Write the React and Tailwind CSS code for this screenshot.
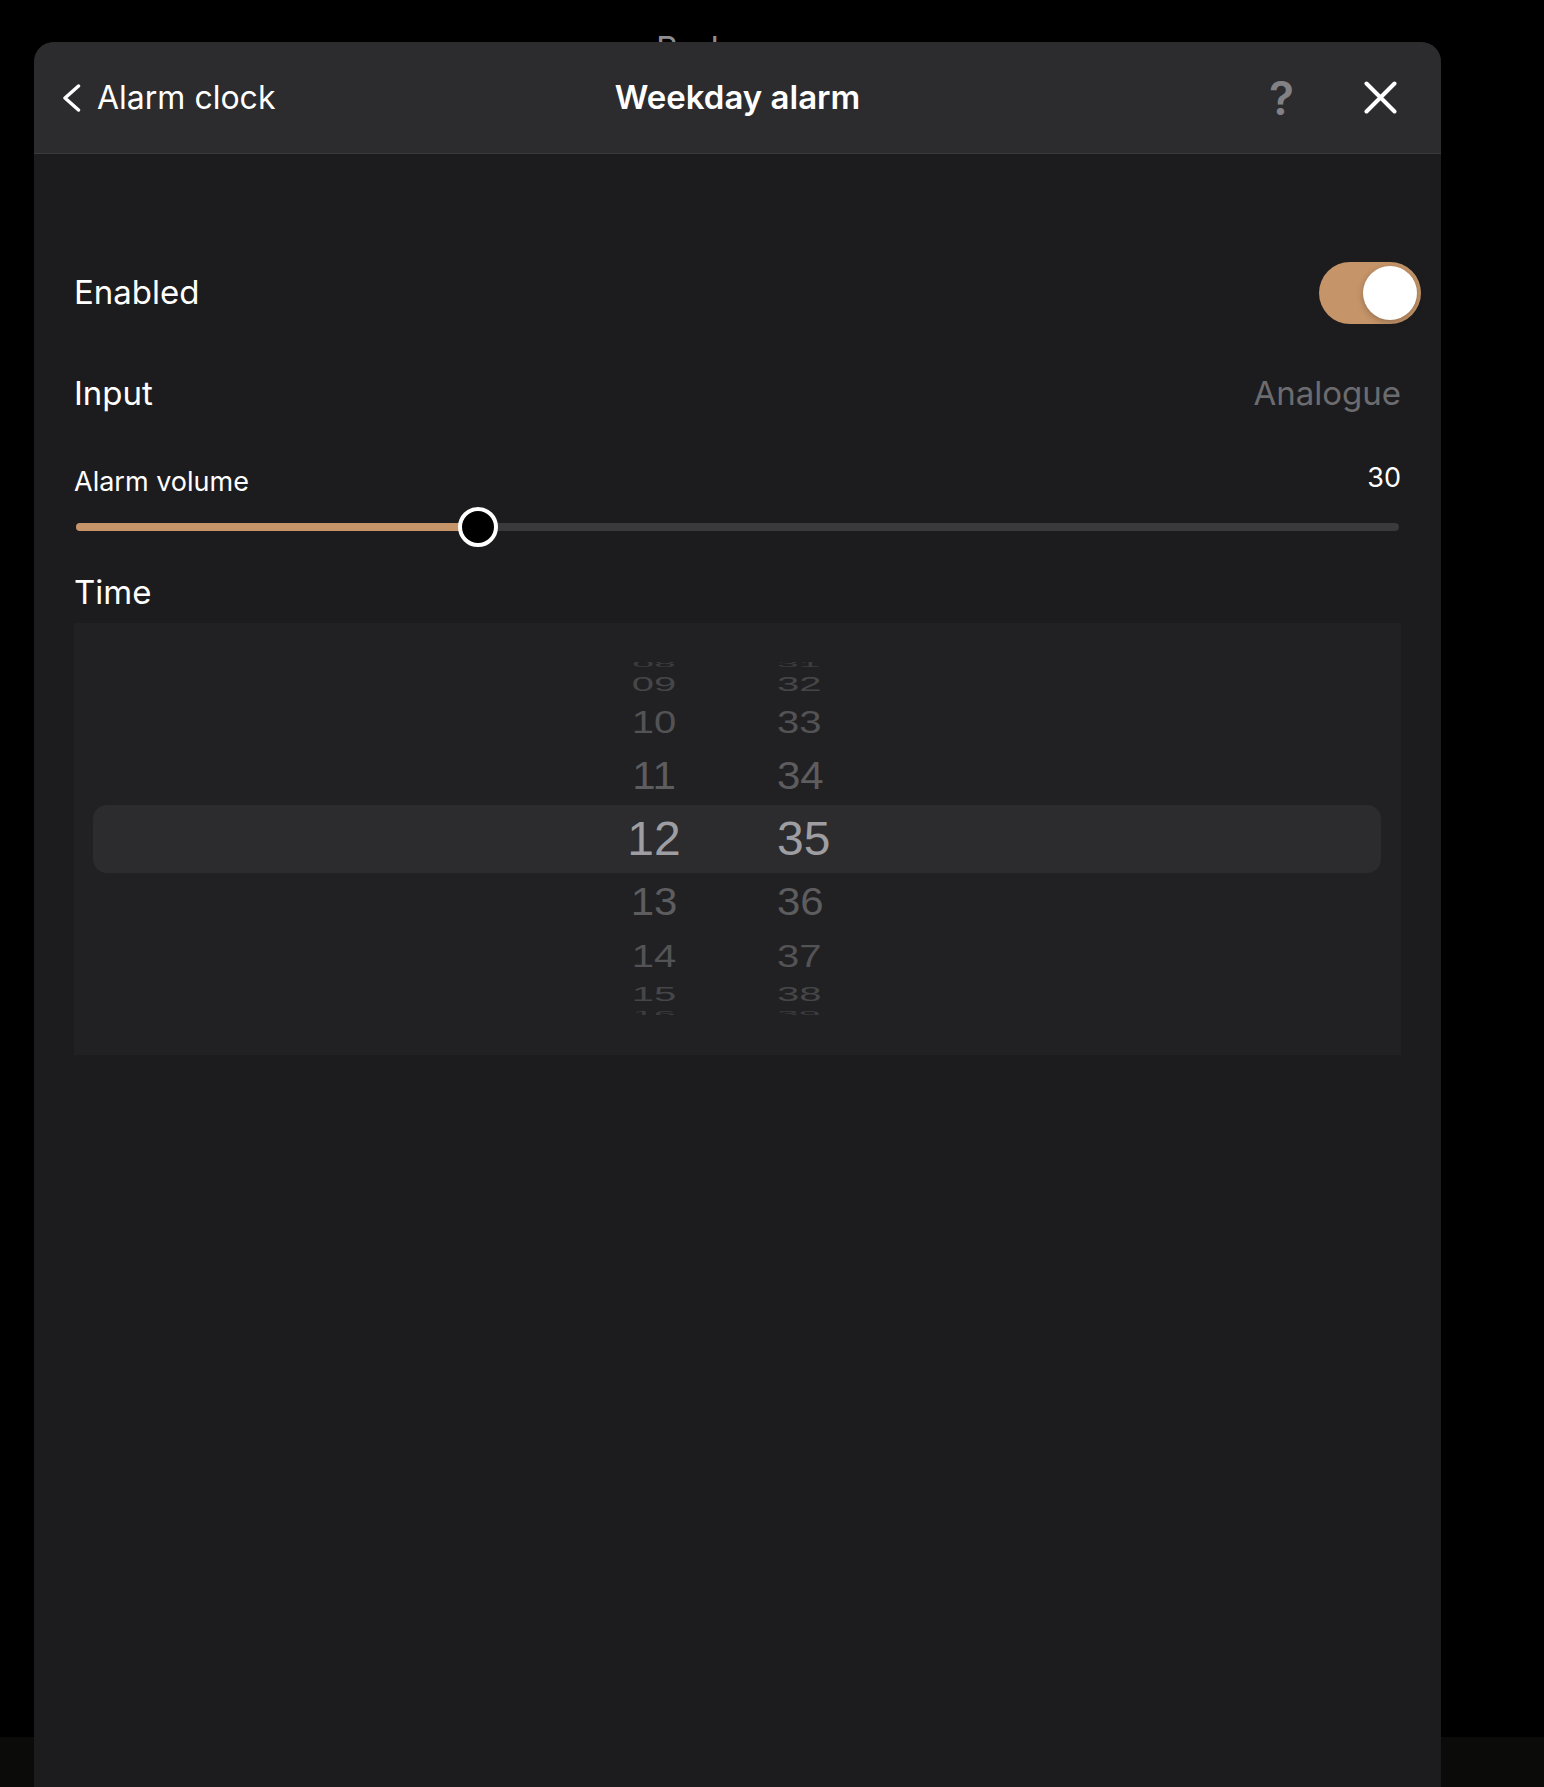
const wheelRows = [
  { h: '08', m: '31', row: 'h-[14px] -mt-[5px]', text: 'text-[39px] scale-y-[0.25] text-[#3c3c3e]' },
  { h: '09', m: '32', row: 'h-[26px]', text: 'text-[40px] scale-y-[0.49] text-[#464648]' },
  { h: '10', m: '33', row: 'h-[50px]', text: 'text-[40px] scale-y-[0.79] text-[#535355]' },
  { h: '11', m: '34', row: 'h-[58px]', text: 'text-[42px] scale-y-[0.93] text-[#5d5d5f]' },
  { h: '12', m: '35', row: 'h-[68px]', text: 'text-[48px] text-[#9e9ea2]' },
  { h: '13', m: '36', row: 'h-[58px]', text: 'text-[42px] scale-y-[0.93] text-[#5d5d5f]' },
  { h: '14', m: '37', row: 'h-[50px]', text: 'text-[40px] scale-y-[0.79] text-[#535355]' },
  { h: '15', m: '38', row: 'h-[26px]', text: 'text-[40px] scale-y-[0.49] text-[#464648]' },
  { h: '16', m: '39', row: 'h-[14px]', text: 'text-[39px] scale-y-[0.25] text-[#3c3c3e]' },
];

function Header() {
  return (
    <header className="grid h-[112px] grid-cols-[1fr_auto_1fr] items-center rounded-t-[20px] border-b border-[#3a3a3c] bg-[#2c2c2e]">
      <div className="flex items-center pl-[28px]">
        <svg width="19" height="28" viewBox="0 0 19 28" fill="none" aria-hidden="true">
          <path d="M16.5 2 L3 14 L16.5 26" stroke="white" strokeWidth="3.4" strokeLinecap="round" strokeLinejoin="round" />
        </svg>
        <span className="ml-[16px] text-[32px] text-white">Alarm clock</span>
      </div>
      <h1 className="text-[33px] font-semibold text-white">Weekday alarm</h1>
      <div className="flex items-center justify-end pr-[44px]">
        <span className="text-[46px] leading-none font-semibold text-[#828286]">?</span>
        <svg className="ml-[70px]" width="33" height="33" viewBox="0 0 33 33" fill="none" aria-hidden="true">
          <path d="M2.5 2.5 L30.5 30.5 M30.5 2.5 L2.5 30.5" stroke="white" strokeWidth="4" strokeLinecap="round" />
        </svg>
      </div>
    </header>
  );
}

function Toggle() {
  return (
    <div className="-mr-[20px] flex h-[62px] w-[102px] items-center justify-end rounded-full bg-[#c59469] p-[4px]">
      <div className="h-[54px] w-[54px] rounded-full bg-white shadow-[0_2px_6px_rgba(0,0,0,0.25)]" />
    </div>
  );
}

function Slider() {
  return (
    <div className="mx-[2px] mt-[8px] flex h-[40px] items-center">
      <div className="relative h-[8px] w-full rounded-full bg-[#3a3a3c]">
        <div className="h-full w-[402px] rounded-full bg-[#c59469]" />
        <div className="absolute top-[-16px] left-[382px] h-[40px] w-[40px] rounded-full border-[4px] border-white bg-black" />
      </div>
    </div>
  );
}

function TimePicker() {
  return (
    <div className="relative mt-[10px] h-[432px] bg-[#212123] pt-[39px]">
      <div className="absolute top-[182px] right-[20px] left-[19px] h-[68px] rounded-[14px] bg-[#2c2c2e]" />
      <div className="relative h-[353px] overflow-hidden" style={{ fontFamily: '"Liberation Sans", Arial, sans-serif' }}>
        {wheelRows.map((r) => (
          <div key={r.h} className={`flex items-center pl-[520px] ${r.row}`}>
            <div className="w-[120px] text-center">
              <span className={`inline-block leading-none ${r.text}`}>{r.h}</span>
            </div>
            <div className="ml-[63px]">
              <span className={`inline-block leading-none ${r.text}`}>{r.m}</span>
            </div>
          </div>
        ))}
      </div>
    </div>
  );
}

export default function App() {
  return (
    <div className="relative h-[1787px] w-[1544px] overflow-hidden bg-black" style={{ fontFamily: 'Inter, "Noto Sans", sans-serif' }}>
      <span className="absolute top-[32px] left-[656px] text-[34px] leading-none text-[#8e8e93]">Bedroom</span>
      <div className="absolute right-0 bottom-0 left-0 h-[50px] bg-[#0b0b09]" />

      <div className="relative ml-[34px] mt-[42px] h-[1745px] w-[1407px] rounded-t-[20px] bg-[#1c1c1e]">
        <Header />
        <div className="pt-[108px] pr-[40px] pl-[40px] text-white">
          <div className="flex h-[62px] items-center justify-between">
            <span className="text-[33px]">Enabled</span>
            <Toggle />
          </div>
          <div className="mt-[50px] flex h-[40px] items-center justify-between">
            <span className="text-[33px]">Input</span>
            <span className="text-[33px] text-[#6c6c70]">Analogue</span>
          </div>
          <div className="mt-[51px] flex h-[34px] items-center justify-between">
            <span className="text-[27px]">Alarm volume</span>
            <span className="-translate-y-[4px] text-[27px]">30</span>
          </div>
          <Slider />
          <div className="mt-[26px] flex h-[40px] items-center">
            <span className="text-[33px]">Time</span>
          </div>
          <TimePicker />
        </div>
      </div>
    </div>
  );
}
